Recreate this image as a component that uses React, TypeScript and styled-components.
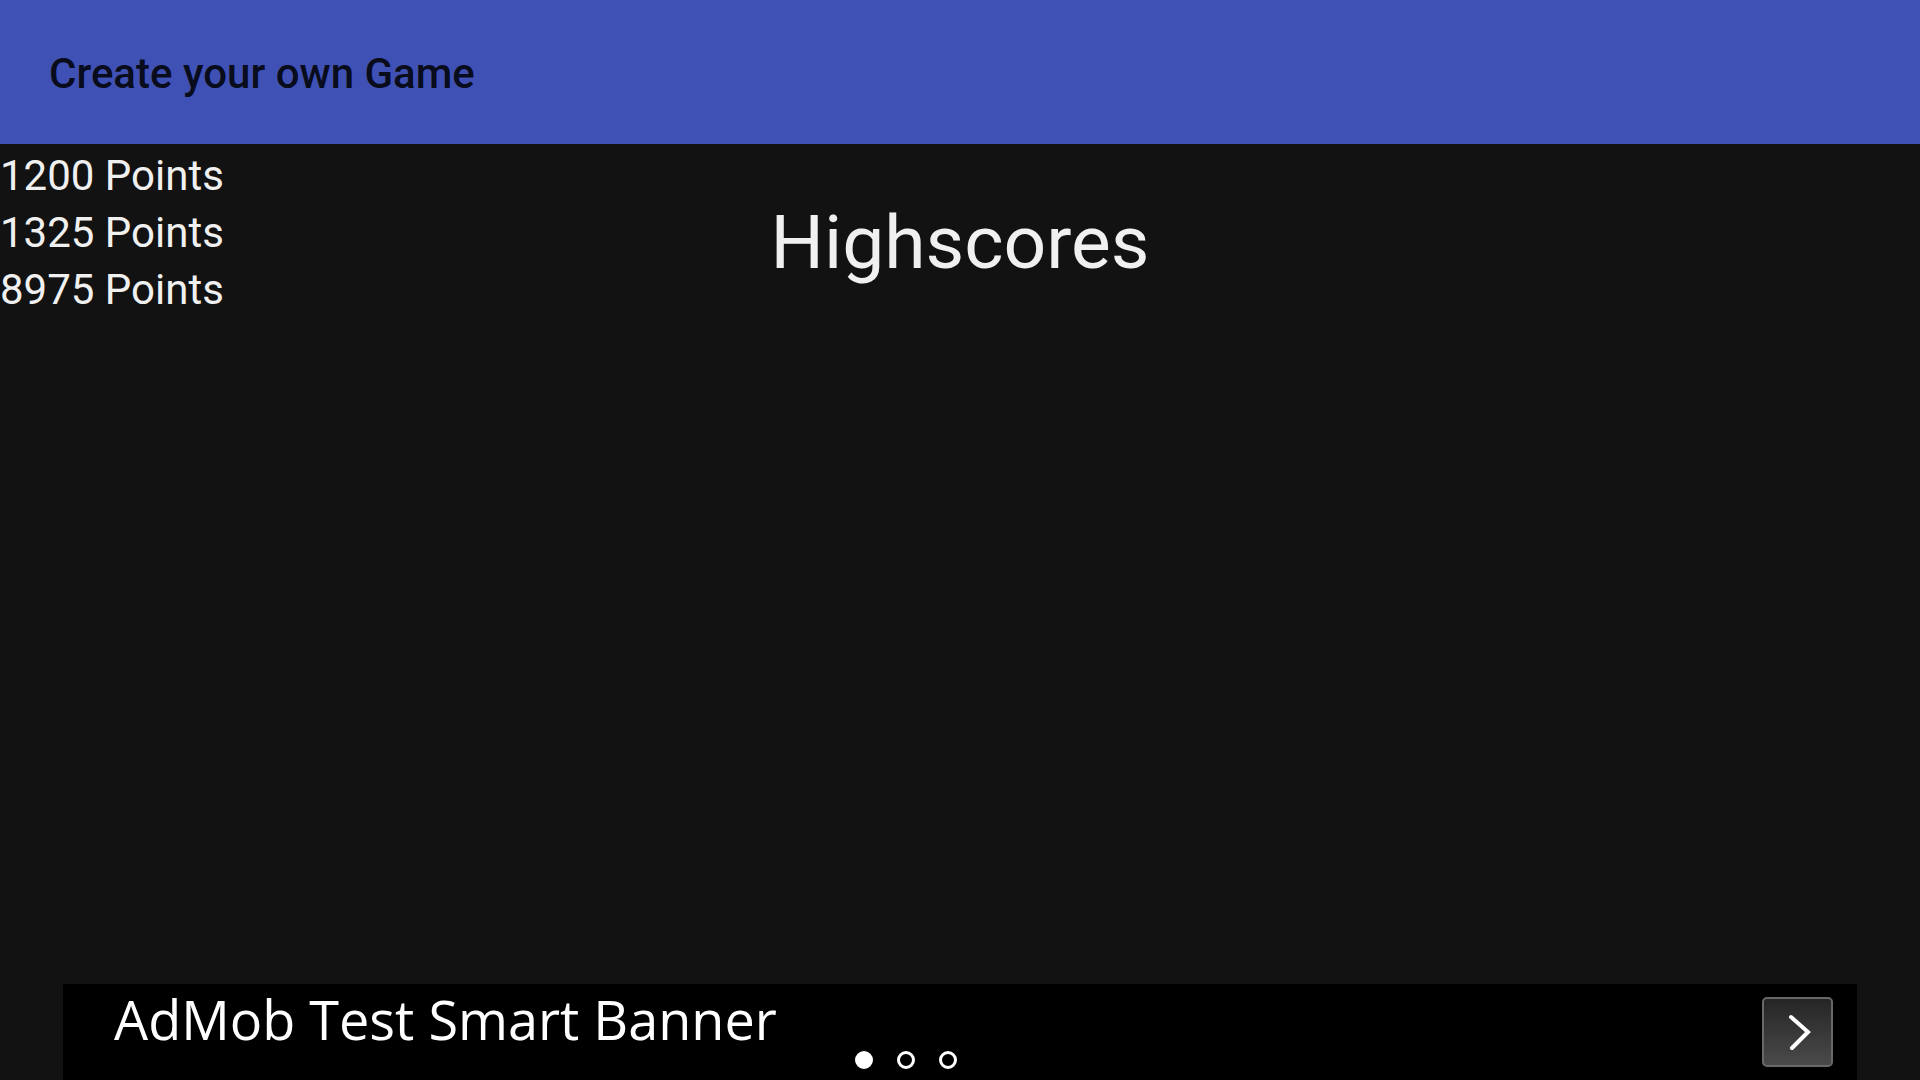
import React from 'react';
import styled, { createGlobalStyle } from 'styled-components';

const GlobalStyle = createGlobalStyle`
  html, body {
    margin: 0;
    padding: 0;
    background-color: #121212;
    font-family: Roboto, "Liberation Sans", sans-serif;
  }
`;

const Page = styled.div`
  width: 100%;
  height: 100vh;
  display: flex;
  flex-direction: column;
  overflow: hidden;
  background-color: #121212;
`;

const TopBar = styled.header`
  height: 144px;
  flex-shrink: 0;
  background-color: #3f51b5;
  box-sizing: border-box;
  padding: 3px 49px 0px 49px;
  display: flex;
  align-items: center;
`;

const Title = styled.h1`
  margin: 0;
  font-size: 42px;
  font-weight: 500;
  color: rgba(0, 0, 0, 0.87);
`;

const Content = styled.main`
  flex: 1;
  display: grid;
  grid-template-columns: 1fr auto 1fr;
  align-items: start;
`;

const Scores = styled.ul`
  list-style: none;
  margin: 0;
  padding: 3px 0px 0px 0px;
`;

const Score = styled.li`
  font-size: 42px;
  line-height: 57px;
  color: #f0f0f0;
`;

const Heading = styled.h2`
  margin: 61px 0px 0px 0px;
  font-size: 75px;
  font-weight: 400;
  line-height: 1;
  color: #f0f0f0;
`;

const Banner = styled.div`
  height: 96px;
  flex-shrink: 0;
  margin: 0px 63px;
  background-color: #000;
  display: flex;
  align-items: flex-start;
  box-sizing: border-box;
  padding: 8px 24px 0px 51px;
`;

const BannerText = styled.div`
  font-family: "Open Sans", "Liberation Sans", sans-serif;
  font-size: 54px;
  line-height: 1;
  color: #fff;
  white-space: nowrap;
`;

const Dots = styled.div`
  display: flex;
  align-items: center;
  gap: 24px;
  margin: 59px 0px 0px 78px;
`;

const Dot = styled.span<{ $active?: boolean }>`
  width: 18px;
  height: 18px;
  box-sizing: border-box;
  border-radius: 50%;
  border: 3px solid #fff;
  background-color: ${(p) => (p.$active ? '#fff' : 'transparent')};
`;

const Spacer = styled.div`
  flex: 1;
`;

const NextButton = styled.button`
  width: 71px;
  height: 70px;
  margin-top: 5px;
  box-sizing: border-box;
  border: 2px solid #686868;
  border-radius: 5px;
  background: linear-gradient(#252525, #4a4a4a);
  display: flex;
  align-items: center;
  justify-content: center;
  padding: 0;
  cursor: pointer;
`;

export default function App() {
  const scores = [1200, 1325, 8975];

  return (
    <Page>
      <GlobalStyle />
      <TopBar>
        <Title>Create your own Game</Title>
      </TopBar>
      <Content>
        <Scores>
          {scores.map((s) => (
            <Score key={s}>{s} Points</Score>
          ))}
        </Scores>
        <Heading>Highscores</Heading>
        <div />
      </Content>
      <Banner>
        <BannerText>AdMob Test Smart Banner</BannerText>
        <Dots>
          <Dot $active />
          <Dot />
          <Dot />
        </Dots>
        <Spacer />
        <NextButton>
          <svg width="32" height="40" viewBox="0 0 32 40">
            <polyline
              points="9,5 26,20 10,36"
              fill="none"
              stroke="#fff"
              strokeWidth="4"
              strokeLinecap="round"
              strokeLinejoin="miter"
            />
          </svg>
        </NextButton>
      </Banner>
    </Page>
  );
}
